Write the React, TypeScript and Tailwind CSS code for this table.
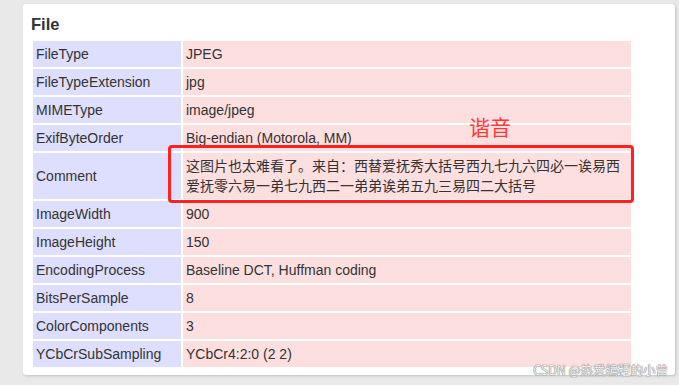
const rows: [string, string][] = [
  ["FileType", "JPEG"],
  ["FileTypeExtension", "jpg"],
  ["MIMEType", "image/jpeg"],
  ["ExifByteOrder", "Big-endian (Motorola, MM)"],
  [
    "Comment",
    "这图片也太难看了。来自：西替爱抚秀大括号西九七九六四必一诶易西爱抚零六易一弟七九西二一弟弟诶弟五九三易四二大括号",
  ],
  ["ImageWidth", "900"],
  ["ImageHeight", "150"],
  ["EncodingProcess", "Baseline DCT, Huffman coding"],
  ["BitsPerSample", "8"],
  ["ColorComponents", "3"],
  ["YCbCrSubSampling", "YCbCr4:2:0 (2 2)"],
];

export default function App() {
  return (
    <div
      className="w-[679px] h-[385px] bg-[#e9e9e9] pl-[23px] pt-[4px] overflow-hidden"
      style={{ fontFamily: '"Liberation Sans", Arial, "Noto Sans CJK SC", sans-serif' }}
    >
      <div className="relative w-[652px] h-[371px] bg-white rounded-[3px] shadow-[1px_1px_3px_rgba(0,0,0,0.18)] px-[8px] pt-[10px]">
        {/* Heading */}
        <h3 className="h-[20px] leading-[20px] text-[16.5px] font-bold text-[#333] mb-[5px]">File</h3>

        {/* Tag table */}
        <table className="w-[602px] table-fixed border-separate border-spacing-[2px] text-[14px] text-[#333]">
          <tbody>
            {rows.map(([k, v]) => (
              <tr key={k}>
                <td className="w-[148px] bg-[#dedefe] px-[3px] py-[3px] leading-[20px] align-middle">{k}</td>
                <td className="w-[448px] bg-[#fedfdf] px-[3px] py-[3px] leading-[20px] align-middle">{v}</td>
              </tr>
            ))}
          </tbody>
        </table>

        {/* Annotation */}
        <div className="absolute left-[145px] top-[141px] w-[466px] h-[58px] border-[3px] border-[#ff2020] rounded-[4px]" />
        <div className="absolute left-[446px] top-[110px] text-[21px] leading-[24px] text-[#ff3a3a]" style={{ fontFamily: '"Noto Sans CJK SC", sans-serif' }}>
          谐音
        </div>

        {/* Watermark */}
        <div className="absolute right-[7px] bottom-[-3px] text-[12.5px] leading-[16px] text-[#f4f4f4] [text-shadow:0_0_1px_#666,0_0_1px_#666]" style={{ fontFamily: '"Noto Sans CJK SC", sans-serif' }}>
          CSDN @热爱编程的小曾
        </div>
      </div>
    </div>
  );
}
